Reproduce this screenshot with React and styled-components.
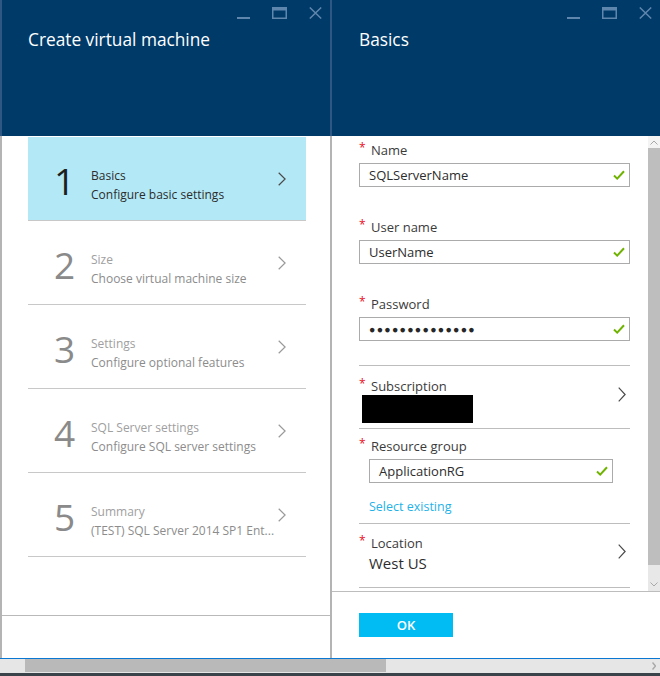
import React from 'react';
import styled, { createGlobalStyle } from 'styled-components';

const GlobalStyle = createGlobalStyle`
  html, body {
    margin: 0;
    padding: 0;
    width: 660px;
    height: 676px;
    overflow: hidden;
    background: #fff;
    font-family: "Open Sans", "Noto Sans", Arial, sans-serif;
  }
  * { box-sizing: border-box; }
`;

const steps = [
  { n: 1, title: 'Basics', desc: 'Configure basic settings', active: true },
  { n: 2, title: 'Size', desc: 'Choose virtual machine size' },
  { n: 3, title: 'Settings', desc: 'Configure optional features' },
  { n: 4, title: 'SQL Server settings', desc: 'Configure SQL server settings' },
  { n: 5, title: 'Summary', desc: '(TEST) SQL Server 2014 SP1 Ent...' },
];

const Screen = styled.div`
  width: 660px;
  height: 676px;
  display: flex;
  flex-direction: column;
`;

const Blades = styled.div`
  display: flex;
  height: 658px;
`;

const Blade = styled.section`
  width: ${p => p.$width}px;
  display: flex;
  flex-direction: column;
`;

const Header = styled.header`
  height: 136px;
  background: #003a68;
  border-left: 2px solid #2e5883;
  padding-top: 7px;
  display: flex;
  flex-direction: column;
`;

const Controls = styled.div`
  display: flex;
  justify-content: flex-end;
  gap: 22px;
  padding-right: 8px;
  height: 12px;
  color: #5f86ad;
`;

const Title = styled.h1`
  margin: 8px 0 0 ${p => p.$indent}px;
  font-size: 17.3px;
  line-height: 26px;
  font-weight: 400;
  color: #fff;
`;

const Body = styled.div`
  flex: 1;
  display: flex;
  flex-direction: column;
  border-left: 2px solid #b4b4b4;
  min-height: 0;
`;

const StepList = styled.div`
  padding: 1px 0 0 26px;
  width: 304px;
  flex: 1;
`;

const Step = styled.div`
  height: 84px;
  display: flex;
  align-items: center;
  border-bottom: 1px solid #c8c8c8;
  background: ${p => (p.$active ? '#b3e9f7' : 'transparent')};
  padding: 0 20px 0 26px;
`;

const StepNumber = styled.div`
  width: 37px;
  font-size: 37px;
  line-height: 40px;
  font-weight: 400;
  color: ${p => (p.$active ? '#1e1e1e' : '#8a8a8a')};
  margin-top: 4px;
`;

const StepText = styled.div`
  flex: 1;
  font-size: 12px;
  line-height: 19px;
  color: ${p => (p.$active ? '#2c2c2c' : '#8c8c8c')};
  white-space: nowrap;
  margin-top: 12px;
`;

const StepTitle = styled.div`
  color: ${p => (p.$active ? '#2c2c2c' : '#a0a0a0')};
`;

const LeftFooter = styled.div`
  height: 43px;
  border-top: 1px solid #b9b9b9;
`;

const ScrollArea = styled.div`
  height: 455px;
  display: flex;
`;

const Form = styled.div`
  flex: 1;
  padding: 5px 18px 0 27px;
`;

const Section = styled.div`
  border-bottom: 1px solid #bdbdbd;
  padding: ${p => p.$pad || '11px 0 0'};
  height: ${p => p.$h}px;
  position: relative;
`;

const Field = styled.div`
  margin-bottom: ${p => p.$mb ?? 31}px;
  margin-left: ${p => p.$indent || 0}px;
  margin-right: ${p => p.$indentRight || 0}px;
`;

const Label = styled.div`
  display: flex;
  align-items: flex-start;
  font-size: 13px;
  line-height: 18px;
  color: #3b3b3b;
  margin-bottom: 4px;
  margin-left: ${p => p.$shift || 0}px;
`;

const Star = styled.span`
  color: #e81123;
  width: 12px;
  font-size: 12px;
  line-height: 14px;
`;

const Input = styled.div`
  height: 24px;
  border: 1px solid #ababab;
  display: flex;
  align-items: center;
  padding: 0 4px 0 9px;
  font-size: 13px;
  color: #2d2d2d;
  & > span { flex: 1; }
`;

const Dots = styled.span`
  font-size: 10.5px;
  letter-spacing: 1.3px;
  color: #262626;
`;

const Redacted = styled.div`
  width: 111px;
  height: 28px;
  background: #000;
  margin: -4px 0 0 3px;
`;

const Chevron = styled.span`
  position: absolute;
  right: 4px;
  top: ${p => p.$top}px;
  display: flex;
  color: #4a4a4a;
`;

const StepChevron = styled.span`
  display: flex;
  color: ${p => (p.$active ? '#4a4a4a' : '#9a9a9a')};
`;

const Link = styled.div`
  font-size: 12.5px;
  line-height: 18px;
  color: #1fb2e8;
  margin: 15px 0 0 10px;
`;

const Value = styled.div`
  font-size: 15px;
  line-height: 20px;
  color: #2d2d2d;
  margin: -3px 0 0 10px;
`;

const VScroll = styled.div`
  width: 12px;
  display: flex;
  flex-direction: column;
  background: #e6e6e6;
`;

const ScrollCap = styled.div`
  height: ${p => p.$h}px;
  background: ${p => p.$bg};
  display: flex;
  justify-content: center;
  align-items: ${p => (p.$end ? 'flex-end' : 'center')};
  padding-bottom: ${p => (p.$end ? 4 : 0)}px;
  color: #a8a8a8;
`;

const Thumb = styled.div`
  height: 417px;
  background: #bebebe;
`;

const RightFooter = styled.div`
  flex: 1;
  border-top: 1px solid #bdbdbd;
  padding: 21px 0 0 27px;
`;

const OkButton = styled.button`
  width: 94px;
  height: 24px;
  border: none;
  background: #00bcf2;
  color: #fff;
  font-family: inherit;
  font-size: 13px;
  font-weight: 600;
  padding: 0;
`;

const HScroll = styled.div`
  height: 18px;
  border-top: 1px solid #0a78d2;
  display: flex;
  flex-direction: column;
`;

const HTrack = styled.div`
  height: 14px;
  background: #e6e6e6;
  display: flex;
  align-items: center;
  padding-left: 25px;
  padding-right: 4px;
`;

const HThumb = styled.div`
  width: 361px;
  height: 13px;
  background: #b9b9b9;
  align-self: flex-start;
`;

const HArrow = styled.span`
  margin-left: auto;
  display: flex;
  color: #a8a8a8;
`;

const TaskBar = styled.div`
  flex: 1;
  background: #3a434a;
`;

const Check = () => (
  <svg width="12" height="10" viewBox="0 0 12 10">
    <path d="M1 5.5 L4.2 8.6 L11 1.2" fill="none" stroke="#6fb300" strokeWidth="2" />
  </svg>
);

const ChevronIcon = ({ w = 8, h = 15 }) => (
  <svg width={w} height={h} viewBox={`0 0 ${w} ${h}`}>
    <path d={`M0.7 0.7 L${w - 0.9} ${h / 2} L0.7 ${h - 0.7}`} fill="none" stroke="currentColor" strokeWidth="1.2" />
  </svg>
);

const WindowControls = () => (
  <Controls>
    <svg width="13" height="12" viewBox="0 0 13 12">
      <rect x="0" y="10" width="13" height="2" fill="currentColor" />
    </svg>
    <svg width="15" height="12" viewBox="0 0 15 12">
      <rect x="0.75" y="0.75" width="13.5" height="10.5" fill="none" stroke="currentColor" strokeWidth="1.5" />
      <rect x="0" y="0" width="15" height="3.5" fill="currentColor" />
    </svg>
    <svg width="13" height="12" viewBox="0 0 13 12">
      <path d="M0.8 0.5 L12.2 11.5 M12.2 0.5 L0.8 11.5" stroke="currentColor" strokeWidth="1.5" />
    </svg>
  </Controls>
);

const TextField = ({ label, value, dots, mb, indent, indentRight, shift }) => (
  <Field $mb={mb} $indent={indent} $indentRight={indentRight}>
    <Label $shift={shift}><Star>*</Star>{label}</Label>
    <Input>
      {dots ? <Dots>{'●'.repeat(14)}</Dots> : <span>{value}</span>}
      <Check />
    </Input>
  </Field>
);

export default function App() {
  return (
    <Screen>
      <GlobalStyle />
      <Blades>
        <Blade $width={330}>
          <Header>
            <WindowControls />
            <Title $indent={26}>Create virtual machine</Title>
          </Header>
          <Body>
            <StepList>
              {steps.map(s => (
                <Step key={s.n} $active={s.active}>
                  <StepNumber $active={s.active}>{s.n}</StepNumber>
                  <StepText $active={s.active}>
                    <StepTitle $active={s.active}>{s.title}</StepTitle>
                    <div>{s.desc}</div>
                  </StepText>
                  <StepChevron $active={s.active}><ChevronIcon w={8} h={14} /></StepChevron>
                </Step>
              ))}
            </StepList>
            <LeftFooter />
          </Body>
        </Blade>
        <Blade $width={330}>
          <Header>
            <WindowControls />
            <Title $indent={27}>Basics</Title>
          </Header>
          <Body>
            <ScrollArea>
              <Form>
                <Section $pad="0" $h={225}>
                  <TextField label="Name" value="SQLServerName" />
                  <TextField label="User name" value="UserName" />
                  <TextField label="Password" dots mb={0} />
                </Section>
                <Section $h={63}>
                  <Label><Star>*</Star>Subscription</Label>
                  <Redacted />
                  <Chevron $top={21}><ChevronIcon /></Chevron>
                </Section>
                <Section $pad="8px 0 0" $h={95}>
                  <TextField label="Resource group" value="ApplicationRG" mb={0} indent={10} indentRight={17} shift={-10} />
                  <Link>Select existing</Link>
                </Section>
                <Section $pad="10px 0 0" $h={64}>
                  <Label><Star>*</Star>Location</Label>
                  <Value>West US</Value>
                  <Chevron $top={20}><ChevronIcon /></Chevron>
                </Section>
              </Form>
              <VScroll>
                <ScrollCap $h={12} $bg="#f4f4f4">
                  <svg width="8" height="5" viewBox="0 0 8 5"><path d="M0.5 4.5 L4 1 L7.5 4.5" fill="none" stroke="currentColor" /></svg>
                </ScrollCap>
                <Thumb />
                <ScrollCap $h={26} $bg="#e8e8e8" $end>
                  <svg width="8" height="5" viewBox="0 0 8 5"><path d="M0.5 0.5 L4 4 L7.5 0.5" fill="none" stroke="currentColor" /></svg>
                </ScrollCap>
              </VScroll>
            </ScrollArea>
            <RightFooter>
              <OkButton>OK</OkButton>
            </RightFooter>
          </Body>
        </Blade>
      </Blades>
      <HScroll>
        <HTrack>
          <HThumb />
          <HArrow>
            <svg width="4" height="8" viewBox="0 0 4 8"><path d="M0.5 0.5 L3.5 4 L0.5 7.5" fill="none" stroke="currentColor" strokeWidth="1.4" /></svg>
          </HArrow>
        </HTrack>
        <TaskBar />
      </HScroll>
    </Screen>
  );
}
